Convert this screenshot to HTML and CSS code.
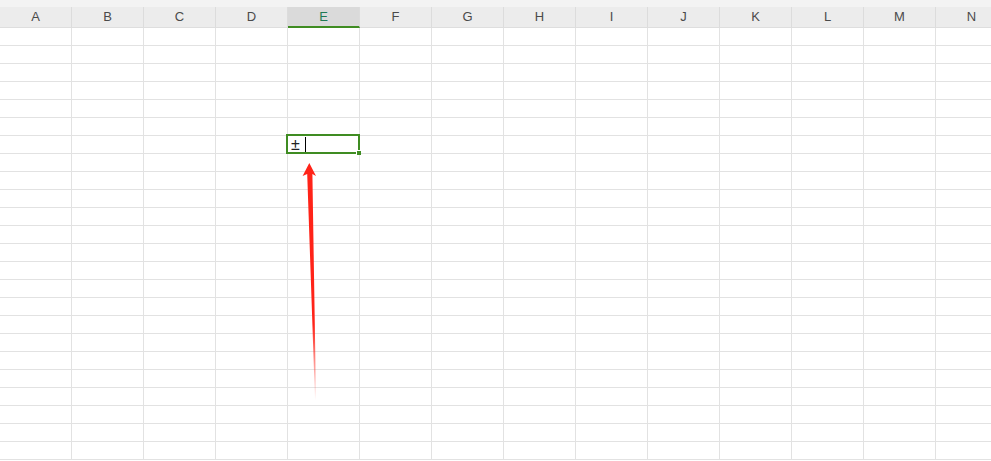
FILE: index.html
```html
<!DOCTYPE html>
<html lang="en">
<head>
  <meta charset="UTF-8">
  <meta name="viewport" content="width=device-width, initial-scale=1.0">
  <title>Sheet</title>
  <link rel="stylesheet" href="styles.css">
</head>
<body>
  <div class="sheet" id="sheet">
    <div class="topbar"></div>
    <div class="header" id="header"></div>
    <div class="grid" id="grid"></div>

    <svg class="arrow" width="30" height="250" viewBox="0 0 30 250">
      <defs>
        <linearGradient id="fade" x1="0" y1="0" x2="0" y2="1">
          <stop offset="0" stop-color="#ff2318" stop-opacity="1"/>
          <stop offset="0.68" stop-color="#ff2318" stop-opacity="1"/>
          <stop offset="1" stop-color="#ff2318" stop-opacity="0"/>
        </linearGradient>
      </defs>
      <polygon fill="url(#fade)" points="14.3,3 21,16 17.4,14 21,240 20,240 12.2,14 7.6,16"/>
    </svg>
  </div>

  <script>
    const cols = ['A','B','C','D','E','F','G','H','I','J','K','L','M','N'];
    const rowCount = 24;
    const activeCol = 4;
    const activeRow = 6;

    const header = document.getElementById('header');
    cols.forEach((c, i) => {
      const h = document.createElement('div');
      h.className = 'col-head' + (i === activeCol ? ' active' : '');
      h.textContent = c;
      header.appendChild(h);
    });

    const grid = document.getElementById('grid');
    for (let r = 0; r < rowCount; r++) {
      cols.forEach((c, i) => {
        const cell = document.createElement('div');
        cell.className = 'cell';
        if (r === activeRow && i === activeCol) {
          cell.classList.add('selected');
          cell.innerHTML = '<span class="value">±</span><span class="caret"></span>' +
            '<span class="frame"></span><span class="handle"></span>';
        }
        grid.appendChild(cell);
      });
    }
  </script>
</body>
</html>
```

FILE: styles.css
```css
body {
  margin: 0;
  background-color: #fff;
  font-family: "Liberation Sans", Arial, sans-serif;
  overflow: hidden;
}

.sheet {
  position: relative;
  width: 991px;
  height: 461px;
  overflow: hidden;
}

.topbar {
  height: 7px;
  background-color: #f3f3f3;
}

.header {
  display: flex;
  width: 1008px;
  background-color: #ececec;
}

.col-head {
  flex: 0 0 72px;
  box-sizing: border-box;
  height: 21px;
  border-right: 1px solid #dcdcdc;
  border-bottom: 1px solid #dedede;
  text-align: center;
  line-height: 20px;
  font-size: 13px;
  color: #4a4a4a;
}

.col-head.active {
  background-color: #dadada;
  border-bottom: 2px solid #3f8c22;
  color: #1f7a55;
}

.grid {
  display: grid;
  grid-template-columns: repeat(14, 72px);
  grid-auto-rows: 18px;
  width: 1008px;
}

.cell {
  box-sizing: border-box;
  border-right: 1px solid #e2e2e2;
  border-bottom: 1px solid #e2e2e2;
}

.cell.selected {
  position: relative;
  display: flex;
  align-items: center;
  padding-left: 3px;
}

.value {
  font-size: 16px;
  color: #222;
  line-height: 17px;
}

.caret {
  width: 1px;
  height: 16px;
  margin-left: 5px;
  background-color: #000;
}

.frame {
  position: absolute;
  left: -2px;
  top: -2px;
  right: -1px;
  bottom: -1px;
  border: 2px solid #3f8c22;
  z-index: 2;
}

.handle {
  position: absolute;
  right: -2px;
  bottom: -2px;
  width: 4px;
  height: 4px;
  background-color: #3f8c22;
  border-left: 1px solid #fff;
  border-top: 1px solid #fff;
  z-index: 3;
}

.arrow {
  position: absolute;
  left: 295px;
  top: 160px;
  z-index: 4;
}
```
